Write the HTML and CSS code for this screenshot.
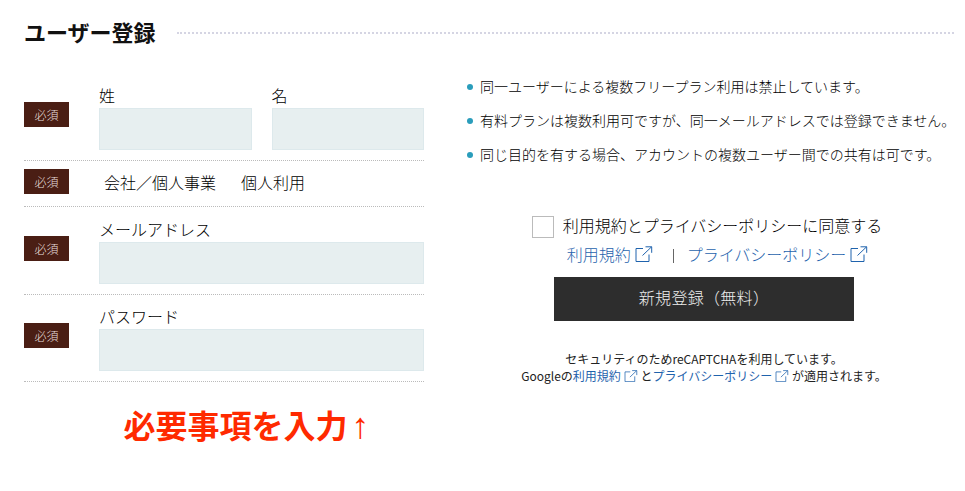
FILE: index.html
```html
<!DOCTYPE html>
<html lang="ja">
<head>
<meta charset="utf-8">
<title>ユーザー登録</title>
<link rel="stylesheet" href="styles.css">
</head>
<body>
<svg class="defs" width="0" height="0" aria-hidden="true">
  <symbol id="ext" viewBox="0 0 18 16">
    <path d="M8 2.500H1v13h13V8.500M7.500 9.500 16.500 .9M10.500 .8h6.200v6" fill="none" stroke="currentColor" stroke-width="1"/>
  </symbol>
</svg>
<main class="page">
  <header class="title-row">
    <h1 class="title">ユーザー登録</h1>
    <span class="title-line"></span>
  </header>
  <div class="columns">
    <form class="form">
      <div class="row">
        <span class="badge">必須</span>
        <div class="fields">
          <label class="field half"><span class="label">姓</span><span class="input"></span></label>
          <label class="field half"><span class="label">名</span><span class="input"></span></label>
        </div>
      </div>
      <div class="row row-choice">
        <span class="badge">必須</span>
        <div class="choices"><span>会社／個人事業</span><span>個人利用</span></div>
      </div>
      <div class="row row-mail">
        <span class="badge">必須</span>
        <label class="field"><span class="label">メールアドレス</span><span class="input"></span></label>
      </div>
      <div class="row">
        <span class="badge">必須</span>
        <label class="field"><span class="label">パスワード</span><span class="input"></span></label>
      </div>
      <p class="notice">必要事項を入力<span class="arrow">↑</span></p>
    </form>
    <aside class="side">
      <ul class="notes">
        <li>同一ユーザーによる複数フリープラン利用は禁止しています。</li>
        <li>有料プランは複数利用可ですが、同一メールアドレスでは登録できません。</li>
        <li>同じ目的を有する場合、アカウントの複数ユーザー間での共有は可です。</li>
      </ul>
      <div class="agree"><span class="check"></span><span>利用規約とプライバシーポリシーに同意する</span></div>
      <div class="links">
        <a class="link">利用規約<svg class="ext"><use href="#ext"/></svg></a>
        <span class="sep"></span>
        <a class="link">プライバシーポリシー<svg class="ext"><use href="#ext"/></svg></a>
      </div>
      <button class="submit" type="button">新規登録（無料）</button>
      <p class="legal">セキュリティのためreCAPTCHAを利用しています。<br>Googleの<a class="mini">利用規約<svg class="ext-s"><use href="#ext"/></svg></a> と<a class="mini">プライバシーポリシー<svg class="ext-s"><use href="#ext"/></svg></a> が適用されます。</p>
    </aside>
  </div>
</main>
</body>
</html>
```
FILE: styles.css
```css
* { box-sizing: border-box; }
html, body { margin: 0; background: #fff; }
body {
  font-family: "Noto Sans CJK JP", "Noto Sans", sans-serif;
  font-weight: 300;
  color: #000;
  width: 965px;
  height: 491px;
  overflow: hidden;
}
.defs { position: absolute; }
.page { padding: 18px 11px 0 24px; }
.title-row { display: flex; align-items: center; height: 30px; gap: 21px; }
.title { margin: 0 0 4px; font-size: 22px; line-height: 26px; font-weight: 700; color: #111; }
.title-line { flex: 1; border-top: 2px dotted #d5d5e3; }
.columns { display: flex; gap: 30px; margin-top: 26px; }
.form { width: 400px; flex: none; }
.row {
  display: flex;
  align-items: center;
  padding: 10px 0;
  border-bottom: 1px dotted #bbb;
}
.row-choice { padding: 8px 0 7px; }
.row-mail { padding-top: 11px; }
.badge {
  flex: none;
  width: 45px;
  height: 25px;
  margin: 0 30px 5px 0;
  background: #4a1e14;
  color: #e8dfdc;
  font-size: 12px;
  line-height: 25px;
  text-align: center;
}
.fields { flex: 1; display: flex; gap: 20px; }
.field { flex: 1; display: block; }
.label { display: block; height: 24px; font-size: 16px; line-height: 22px; }
.input {
  display: block;
  height: 42px;
  background: #e7eff0;
  border: 1px solid #dde9ec;
}
.choices { display: flex; gap: 25px; height: 24px; padding-left: 5px; font-size: 16px; line-height: 20px; }
.notice {
  margin: 22px 0 0;
  padding-left: 45px;
  text-align: center;
  font-size: 32px;
  line-height: 40px;
  font-weight: 700;
  color: #ff2a00;
}
.arrow { margin-left: 4px; font-family: "Liberation Sans", sans-serif; font-size: 36px; line-height: 36px; }
.side { width: 500px; flex: none; }
.notes { list-style: none; margin: 1px 0 0; padding: 0 0 0 13px; }
.notes li {
  position: relative;
  padding-left: 13px;
  height: 34px;
  font-size: 14px;
  line-height: 22px;
  white-space: nowrap;
}
.notes li::before {
  content: "";
  position: absolute;
  left: 0;
  top: 9px;
  width: 6px;
  height: 6px;
  border-radius: 50%;
  background: #2a9dbb;
}
.agree {
  display: flex;
  align-items: center;
  justify-content: center;
  gap: 9px;
  height: 24px;
  margin-top: 38px;
  padding-left: 6px;
  font-size: 16px;
  line-height: 20px;
}
.agree span:last-child { height: 24px; }
.check { width: 22px; height: 22px; background: #fff; border: 1px solid #bbb; }
.links {
  display: flex;
  justify-content: center;
  align-items: center;
  gap: 19px;
  height: 24px;
  margin-top: 5px;
  padding-left: 27px;
  font-size: 16px;
  line-height: 20px;
  color: #1f63ad;
}
.link { display: inline-flex; align-items: center; height: 24px; padding-bottom: 4px; }
.ext { width: 18px; height: 16px; margin-left: 4px; }
.sep { width: 1px; height: 14px; margin: 0 -6px 0 1px; background: #666; }
.submit {
  display: block;
  width: 300px;
  height: 44px;
  margin: 9px auto 0;
  padding: 0 0 4px;
  border: 0;
  background: #2d2d2d;
  color: #eee;
  font: inherit;
  font-size: 16px;
  letter-spacing: 0.3px;
}
.legal {
  margin: 29px 0 0;
  text-align: center;
  font-size: 12px;
  line-height: 17px;
  font-weight: 400;
  color: #222;
}
.mini { color: #1f63ad; }
.ext-s { width: 14px; height: 12px; margin-left: 3px; vertical-align: -1px; }
```
